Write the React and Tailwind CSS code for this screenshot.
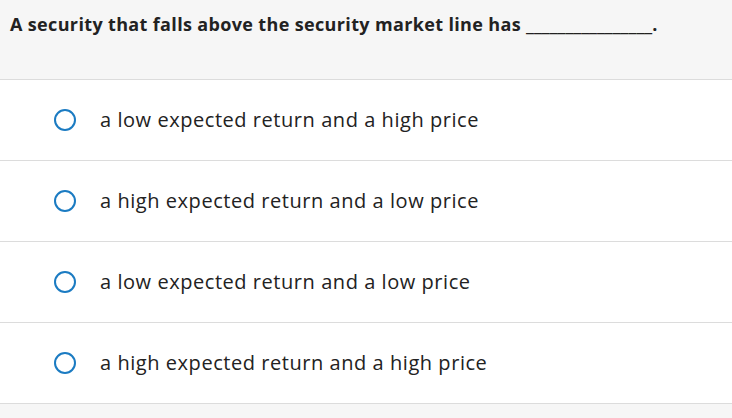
const OPTIONS = [
  'a low expected return and a high price',
  'a high expected return and a low price',
  'a low expected return and a low price',
  'a high expected return and a high price',
]

export default function App() {
  return (
    <div className="h-[418px] w-[732px] overflow-hidden bg-[#f6f6f6] font-['Open_Sans',Arial,sans-serif] text-[#222]">
      <div className="h-[80px] border-b border-[#dcdcdc] px-[10px] pt-[11px]">
        <p className="text-[18px] font-bold leading-[26px] tracking-[0.35px]">
          A security that falls above the security market line has{' '}
          <span className="font-normal tracking-[0px]">________________</span>.
        </p>
      </div>
      <div className="bg-white">
        {OPTIONS.map((opt) => (
          <div key={opt} className="flex h-[81px] items-center border-b border-[#dcdcdc]">
            <div className="ml-[54px] h-[22px] w-[22px] rounded-full border-[2.5px] border-[#1b7bc2]" />
            <span className="ml-[24px] text-[20px] leading-[28px] tracking-[0.55px]">{opt}</span>
          </div>
        ))}
      </div>
    </div>
  )
}
